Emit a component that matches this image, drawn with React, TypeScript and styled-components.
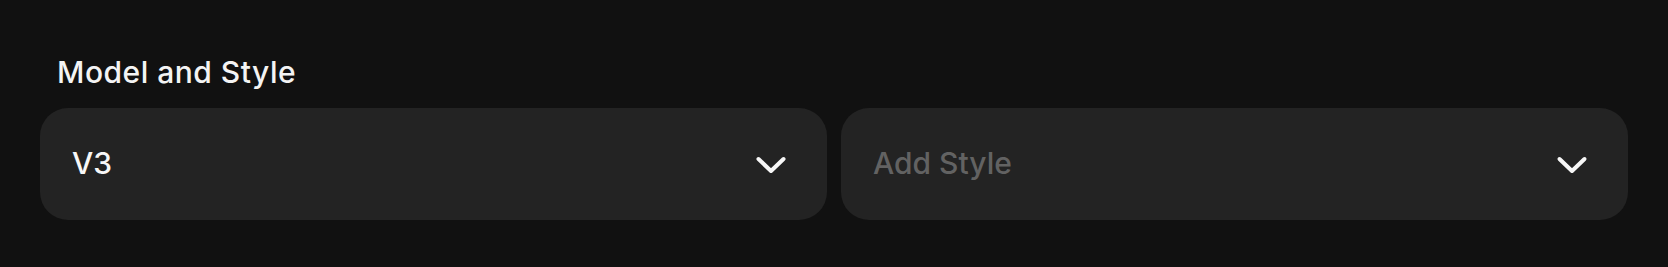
import React from "react";
import styled, { createGlobalStyle } from "styled-components";

const GlobalStyle = createGlobalStyle`
  html, body {
    margin: 0;
    padding: 0;
    background: #111111;
  }
  body {
    font-family: Inter, "Noto Sans", "Liberation Sans", sans-serif;
    -webkit-font-smoothing: antialiased;
  }
  #root {
    min-height: 267px;
    background: #111111;
  }
`;

const Section = styled.section`
  display: flex;
  flex-direction: column;
  gap: 18px;
  padding: 55px 40px 48px;
  box-sizing: border-box;
`;

const Label = styled.div`
  padding-left: 17px;
  font-size: 30px;
  line-height: 35px;
  font-weight: 500;
  color: #f4f4f4;
  letter-spacing: 0.5px;
`;

const Row = styled.div`
  display: flex;
  gap: 14px;
`;

const Select = styled.button<{ $placeholder?: boolean }>`
  flex: 1;
  height: 112px;
  display: flex;
  align-items: center;
  justify-content: space-between;
  padding: 0 40px 3px 32px;
  box-sizing: border-box;
  border: none;
  border-radius: 28px;
  background: #232323;
  font-family: inherit;
  font-size: 30px;
  font-weight: 500;
  color: ${(p) => (p.$placeholder ? "#626262" : "#f7f7f7")};
  cursor: pointer;
  text-align: left;
`;

const Chevron = styled.svg`
  width: 32px;
  height: 20px;
  flex: none;
  margin-top: 3px;
`;

const ChevronDown = () => (
  <Chevron viewBox="0 0 32 20" fill="none">
    <path
      d="M3.5 5 L16 17 L28.5 5"
      stroke="#f7f7f7"
      strokeWidth="4"
      strokeLinecap="round"
      strokeLinejoin="round"
    />
  </Chevron>
);

export default function App() {
  return (
    <>
      <GlobalStyle />
      <Section>
        <Label>Model and Style</Label>
        <Row>
          <Select type="button">
            <span>V3</span>
            <ChevronDown />
          </Select>
          <Select type="button" $placeholder>
            <span>Add Style</span>
            <ChevronDown />
          </Select>
        </Row>
      </Section>
    </>
  );
}
